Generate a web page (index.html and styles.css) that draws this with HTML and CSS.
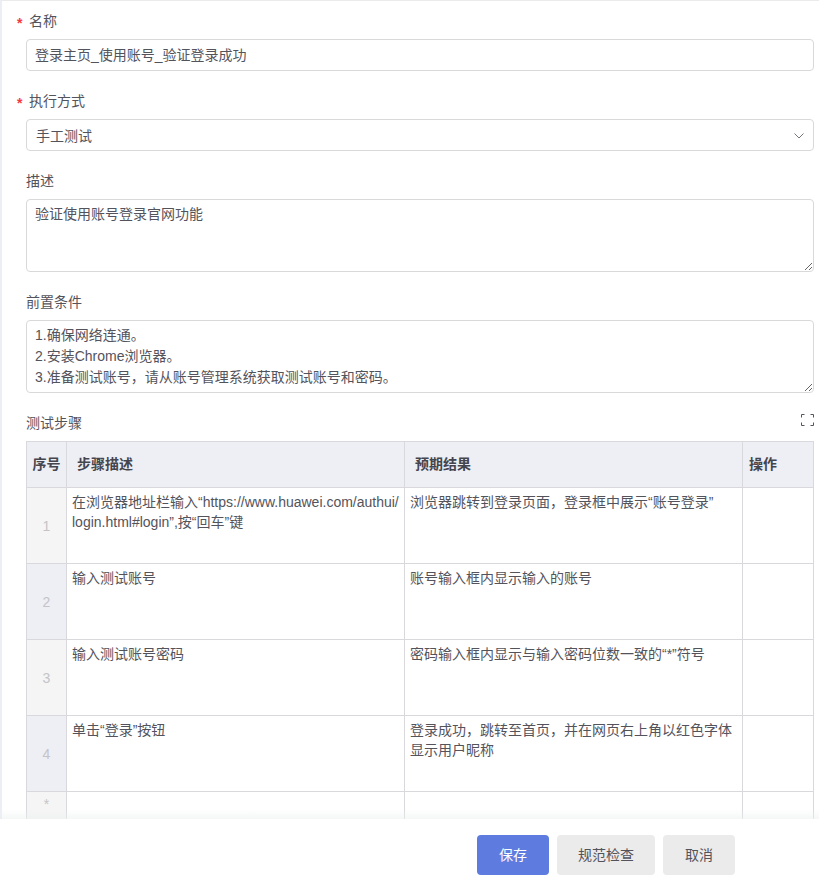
FILE: index.html
```html
<!DOCTYPE html>
<html lang="zh-CN">
<head>
<meta charset="utf-8">
<title>用例编辑</title>
<link rel="stylesheet" href="styles.css">
</head>
<body>
<div class="page">
  <main class="form">
    <div class="field">
      <div class="label required">名称</div>
      <div class="control">登录主页_使用账号_验证登录成功</div>
    </div>
    <div class="field">
      <div class="label required">执行方式</div>
      <div class="control select">
        <span>手工测试</span>
        <svg class="chevron" width="10" height="6" viewBox="0 0 10 6"><path d="M.5.5 5 5 9.500.5" fill="none" stroke="#75757f" stroke-width="1"/></svg>
      </div>
    </div>
    <div class="field">
      <div class="label">描述</div>
      <textarea class="area" readonly>验证使用账号登录官网功能</textarea>
    </div>
    <div class="field">
      <div class="label">前置条件</div>
      <textarea class="area" readonly>1.确保网络连通。
2.安装Chrome浏览器。
3.准备测试账号，请从账号管理系统获取测试账号和密码。</textarea>
    </div>
    <div class="steps-head">
      <div class="label">测试步骤</div>
      <svg class="expand" width="13" height="12" viewBox="0 0 13 12"><path d="M.5 3.500V.5h3M9.500.5h3v3M12.500 8.500v3h-3M3.500 11.500h-3v-3" fill="none" stroke="#55555f" stroke-width="1"/></svg>
    </div>
    <table class="steps">
      <colgroup><col class="c-no"><col class="c-text"><col class="c-text"><col class="c-op"></colgroup>
      <thead>
        <tr><th class="no">序号</th><th class="wide">步骤描述</th><th class="wide">预期结果</th><th>操作</th></tr>
      </thead>
      <tbody>
        <tr><td class="no">1</td><td>在浏览器地址栏输入“https://www.huawei.com/authui/<br>login.html#login”,按“回车”键</td><td>浏览器跳转到登录页面，登录框中展示“账号登录”</td><td></td></tr>
        <tr><td class="no alt">2</td><td>输入测试账号</td><td>账号输入框内显示输入的账号</td><td></td></tr>
        <tr><td class="no">3</td><td>输入测试账号密码</td><td>密码输入框内显示与输入密码位数一致的“*”符号</td><td></td></tr>
        <tr><td class="no alt">4</td><td>单击“登录”按钮</td><td>登录成功，跳转至首页，并在网页右上角以红色字体<br>显示用户昵称</td><td></td></tr>
        <tr><td class="no star">*</td><td></td><td></td><td></td></tr>
      </tbody>
    </table>
  </main>
  <footer class="footer">
    <button class="btn primary">保存</button>
    <button class="btn check">规范检查</button>
    <button class="btn">取消</button>
  </footer>
</div>
</body>
</html>
```
FILE: styles.css
```css
* { box-sizing: border-box; }
html, body { margin: 0; height: 100%; overflow: hidden; background: #fff; }
body {
  font-family: "Liberation Sans", "Noto Sans CJK SC", sans-serif;
  font-size: 14px;
  line-height: 21px;
  color: #53535c;
}
.page { height: 887px; display: flex; flex-direction: column; }
.form {
  height: 819px;
  overflow: hidden;
  flex: none;
  padding: 10px 5px 0 24px;
  border-top: 1px solid #ebebeb;
  border-left: 2px solid #eceef5;
}
.field { margin-bottom: 20px; }
.label { height: 21px; margin-bottom: 7px; color: #53535c; position: relative; }
.required { padding-left: 3px; }
.required::before {
  content: "*";
  position: absolute;
  left: -9px;
  top: 2px;
  color: #f5393f;
  font-weight: 700;
}
.control {
  height: 32px;
  border: 1px solid #d9d9d9;
  border-radius: 4px;
  padding: 5px 8px;
  background: #fff;
}
.select { display: flex; justify-content: space-between; align-items: center; padding: 2px 9px 0 9px; }
.chevron { display: block; }
.area {
  display: block;
  width: 100%;
  height: 73px;
  border: 1px solid #d9d9d9;
  border-radius: 4px;
  padding: 4px 8px;
  font: inherit;
  color: inherit;
  background: #fff;
  resize: vertical;
  outline: none;
  overflow: hidden;
}
.steps-head { display: flex; justify-content: space-between; align-items: flex-start; height: 28px; }
.expand { display: block; margin-top: 1px; }
.steps {
  width: 787px;
  border-collapse: collapse;
  table-layout: fixed;
}
.c-no { width: 40px; }
.c-text { width: 338px; }
.c-op { width: 71px; }
.steps th, .steps td { border: 1px solid #d9d9dd; padding: 0; vertical-align: top; }
.steps th {
  height: 46px;
  background: #edeff4;
  color: #45454e;
  font-weight: 700;
  text-align: left;
  vertical-align: middle;
  padding: 0 6px;
}
.steps th.wide { padding-left: 10px; }
.steps th.no { padding: 0; text-align: center; }
.steps td { height: 76px; padding: 4px 5px 0; line-height: 20px; }
.steps td.no {
  background: #f5f5f5;
  color: #c4c4c8;
  text-align: center;
  vertical-align: middle;
  padding: 1px 0 0;
}
.steps td.alt { background: #edeff4; }
.steps td.star { vertical-align: top; padding-top: 2px; }
.footer {
  height: 68px;
  flex: none;
  display: flex;
  justify-content: flex-end;
  gap: 8px;
  padding: 16px 84px 0 0;
  background: #fff;
  position: relative;
}
.footer::before {
  content: "";
  position: absolute;
  left: 0;
  right: 0;
  top: -10px;
  height: 10px;
  background: linear-gradient(to bottom, rgba(235, 240, 238, 0), rgba(235, 240, 238, .5));
  pointer-events: none;
}
.btn {
  height: 40px;
  width: 72px;
  border: 0;
  border-radius: 4px;
  background: #ebebeb;
  color: #53535c;
  font: inherit;
  padding: 0;
}
.check { width: 98px; }
.primary { background: #5e7ce0; color: #fff; }
```
